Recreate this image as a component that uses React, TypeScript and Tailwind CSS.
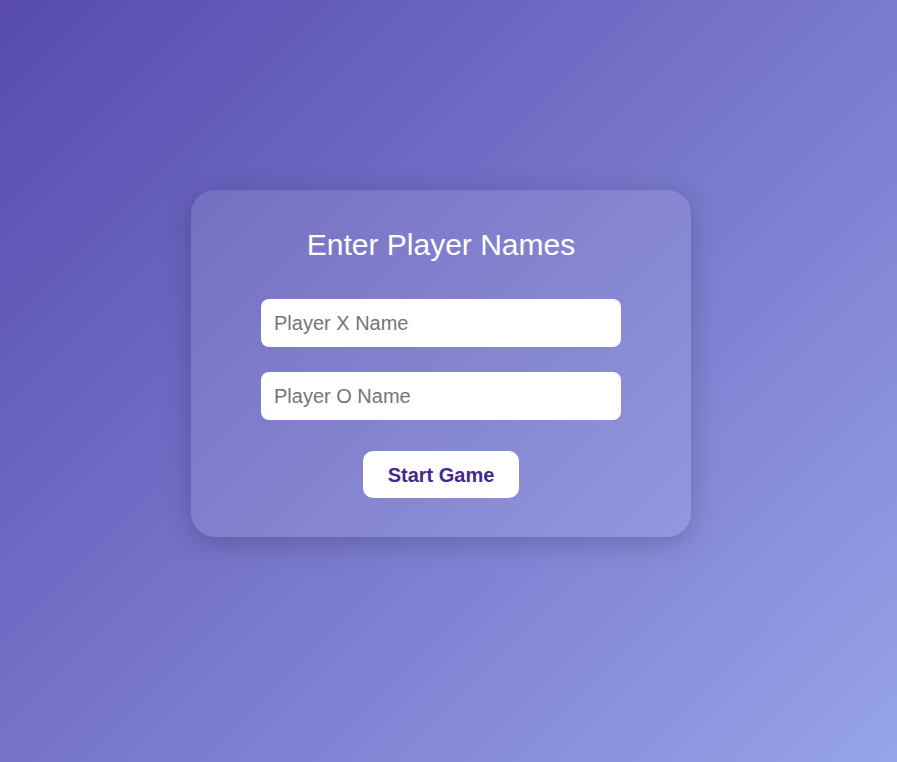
import React from "react";

export default function App() {
  return (
    <div
      className="w-full h-[762px] overflow-hidden bg-[linear-gradient(135deg,#584aae_0%,#96a3e9_100%)]"
      style={{ fontFamily: '"Liberation Sans", Arial, sans-serif' }}
    >
      <div className="w-[882px] h-[727px] flex items-center justify-center">
        <div className="w-[500px] flex flex-col items-center rounded-[24px] bg-white/10 pt-10 pb-[39px] shadow-[0_6px_28px_rgba(0,0,0,0.2)]">
          <h2 className="text-[30px] leading-[30px] text-white font-normal mb-[39px]">
            Enter Player Names
          </h2>
          <input
            type="text"
            placeholder="Player X Name"
            className="w-[360px] h-12 rounded-lg bg-white px-[13px] text-[20px] text-gray-800 placeholder:text-[#757575] outline-none border-0"
          />
          <input
            type="text"
            placeholder="Player O Name"
            className="mt-[25px] w-[360px] h-12 rounded-lg bg-white px-[13px] text-[20px] text-gray-800 placeholder:text-[#757575] outline-none border-0"
          />
          <button className="mt-[31px] w-[156px] h-[47px] rounded-[10px] bg-white text-[20px] font-bold text-[#46288f]">
            Start Game
          </button>
        </div>
      </div>
    </div>
  );
}
